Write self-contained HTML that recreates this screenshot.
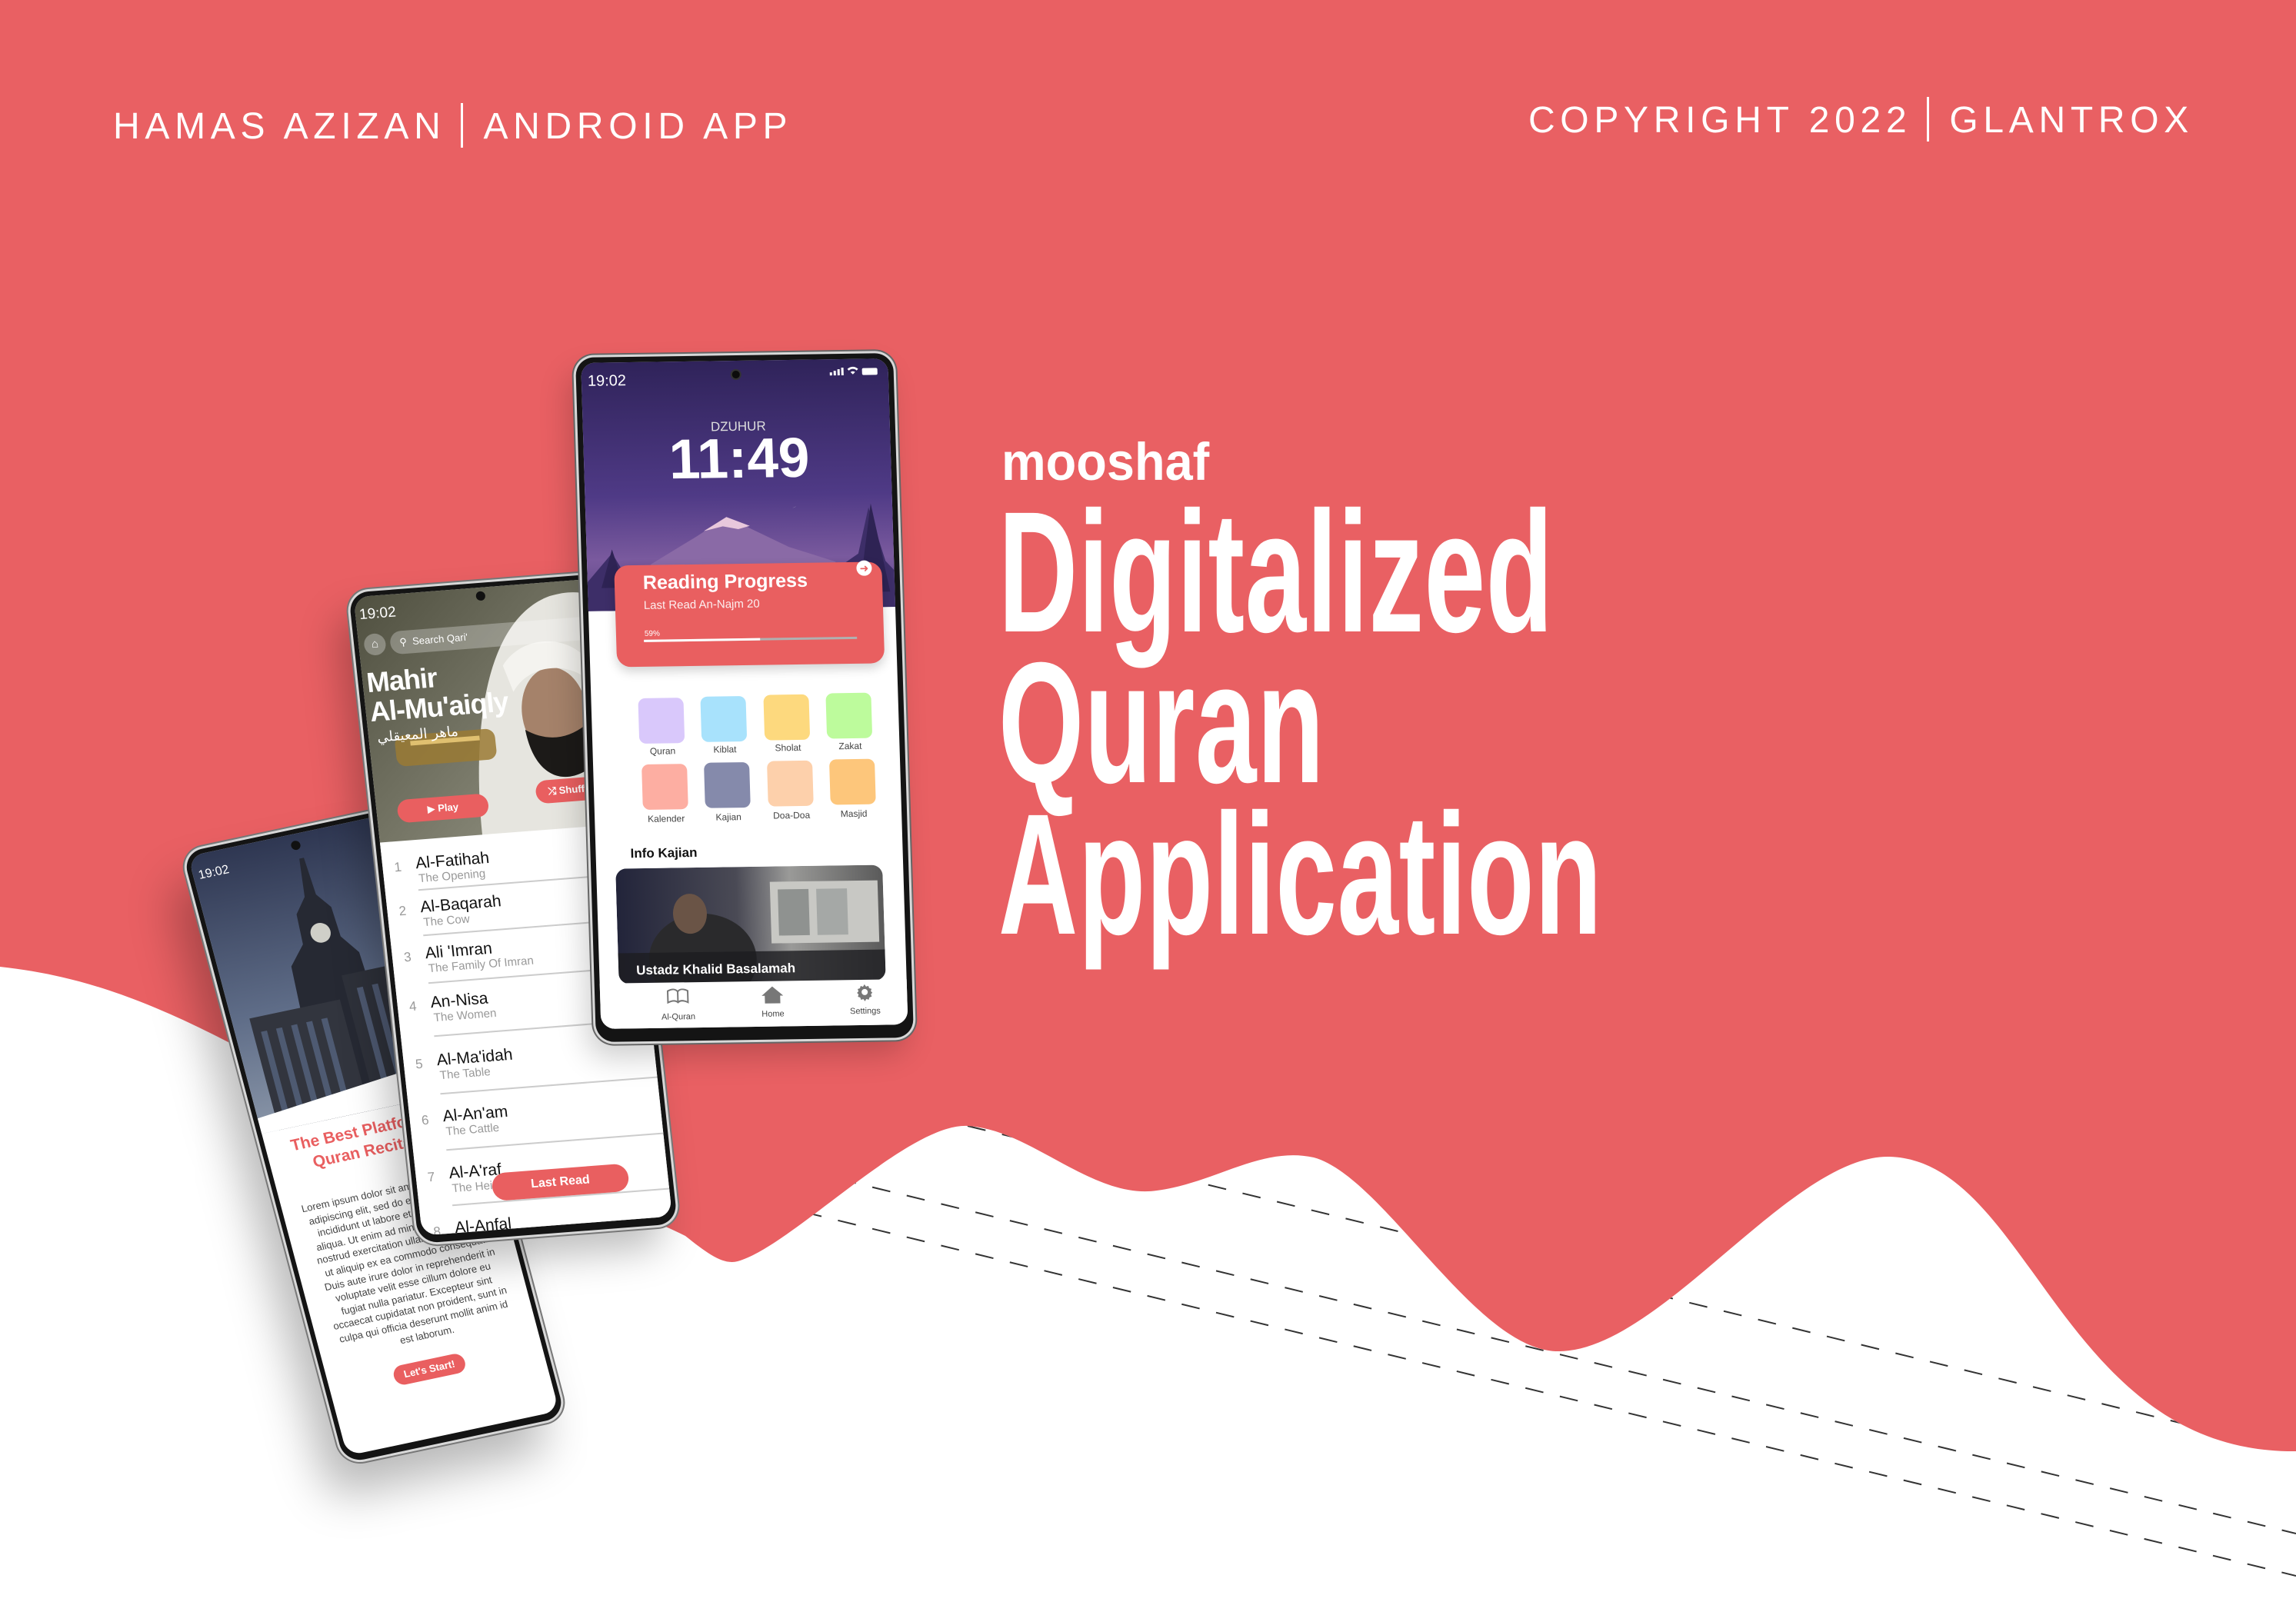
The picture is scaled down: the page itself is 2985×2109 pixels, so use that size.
<!DOCTYPE html>
<html><head><meta charset="utf-8">
<style>
*{margin:0;padding:0;box-sizing:border-box}
body{width:2985px;height:2109px;overflow:hidden;position:relative;background:#fff;font-family:"Liberation Sans","DejaVu Sans",sans-serif}
.abs{position:absolute;white-space:nowrap}
.hdr{position:absolute;color:#fff;font-size:48px;line-height:48px;letter-spacing:6.7px;white-space:nowrap}
.pipe{display:inline-block;width:3px;height:58px;background:#fff;vertical-align:-12px;margin:0 26px 0 20px}
.title{position:absolute;left:1298px;color:#fff;font-weight:bold;font-size:224px;line-height:224px;white-space:nowrap;transform:scaleX(0.638);transform-origin:0 0;letter-spacing:1px}
.phone{position:absolute;transform-origin:0 0;background:#141414;box-shadow:0 0 0 3px #d8d8d8,0 0 0 5px #777}
.screen{position:absolute;overflow:hidden;background:#fff}
.in{position:absolute;left:-7px;top:-7px;width:420px;height:900px}
.in div{white-space:nowrap}
.ic{position:absolute;width:59px;height:59px;border-radius:9px}
.lb{position:absolute;width:100px;text-align:center;font-size:12px;color:#444}
.row .n{position:absolute;font-size:17px;color:#999}
.t{position:absolute;font-size:21px;color:#111;white-space:nowrap}
.s{position:absolute;font-size:15px;color:#999;white-space:nowrap}
.ln{position:absolute;height:2px;background:#ccc}
</style></head><body>
<svg class="abs" style="left:0;top:0" width="2985" height="2109" viewBox="0 0 2985 2109">
<defs><clipPath id="wc"><path d="M0,1257 C120,1270 220,1310 380,1400 C560,1500 800,1560 891,1607 C920,1630 940,1645 959,1640 C1030,1620 1180,1460 1258,1464 C1340,1468 1420,1560 1504,1548 C1580,1538 1640,1490 1708,1505 C1800,1530 1920,1760 2028,1757 C2160,1755 2330,1500 2457,1504 C2640,1510 2680,1890 2985,1887 L2985,2109 L0,2109 Z"/></clipPath></defs>
<rect width="2985" height="2109" fill="#E96063"/>
<path d="M0,1257 C120,1270 220,1310 380,1400 C560,1500 800,1560 891,1607 C920,1630 940,1645 959,1640 C1030,1620 1180,1460 1258,1464 C1340,1468 1420,1560 1504,1548 C1580,1538 1640,1490 1708,1505 C1800,1530 1920,1760 2028,1757 C2160,1755 2330,1500 2457,1504 C2640,1510 2680,1890 2985,1887 L2985,2109 L0,2109 Z" fill="#fff"/>
<g clip-path="url(#wc)" stroke="#333" stroke-width="2" stroke-dasharray="24 22" fill="none">
<line x1="1258" y1="1464" x2="2985" y2="1887"/>
<line x1="1000" y1="1511" x2="2985" y2="1994"/>
<line x1="1000" y1="1565" x2="2985" y2="2049"/>
</g>
</svg>

<div class="hdr" style="left:147px;top:134px">HAMAS AZIZAN<span class="pipe"></span>ANDROID APP</div>
<div class="hdr" style="right:133px;top:126px">COPYRIGHT 2022<span class="pipe"></span>GLANTROX</div>

<div class="abs" style="left:1302px;top:566px;color:#fff;font-weight:bold;font-size:69px;line-height:69px;transform:scaleX(0.94);transform-origin:0 0">mooshaf</div>
<div class="title" style="top:632px">Digitalized</div>
<div class="title" style="top:828px">Quran</div>
<div class="title" style="top:1025px">Application</div>

<!-- Phone 3 (back) -->
<div class="phone" style="left:237px;top:1109px;width:293px;height:821px;border-radius:26px;transform:matrix(0.98,-0.208,0.257,0.967,0,0);box-shadow:0 0 0 3px #d8d8d8,0 0 0 5px #777,-30px 40px 60px rgba(0,0,0,.28)">
 <div class="screen" style="left:6px;top:6px;width:281px;height:806px;border-radius:20px">
  <div class="in">
   <svg class="abs" style="left:0;top:0" width="293" height="380">
    <defs><linearGradient id="sky" x1="0" y1="0" x2="0" y2="1"><stop offset="0" stop-color="#2d3550"/><stop offset="0.6" stop-color="#5f6d88"/><stop offset="1" stop-color="#8a96a8"/></linearGradient></defs>
    <rect width="293" height="380" fill="url(#sky)"/>
    <polygon points="146,40 152,40 155,90 170,110 172,150 190,175 200,380 90,380 100,175 122,150 124,110 140,90" fill="#262933"/>
    <circle cx="148" cy="140" r="13" fill="#cfcfc8"/>
    <rect x="30" y="230" width="120" height="150" fill="#32353e"/>
    <rect x="160" y="200" width="90" height="180" fill="#2e313a"/>
    <g fill="#56647f" opacity=".8"><rect x="40" y="250" width="8" height="110"/><rect x="60" y="250" width="8" height="110"/><rect x="80" y="250" width="8" height="110"/><rect x="100" y="250" width="8" height="110"/><rect x="120" y="250" width="8" height="110"/><rect x="175" y="220" width="8" height="130"/><rect x="195" y="220" width="8" height="130"/><rect x="215" y="220" width="8" height="130"/></g>
    <path d="M0,360 L293,330 L293,380 L0,380Z" fill="#fff"/>
   </svg>
   <div class="abs" style="left:14px;top:26px;color:#fff;font-size:16px">19:02</div>
   <div class="abs" style="left:140px;top:16px;width:12px;height:12px;border-radius:50%;background:#111"></div>
   <div class="abs" style="left:20px;top:390px;width:253px;text-align:center;color:#E95F60;font-weight:bold;font-size:21px;line-height:27px">The Best Platform for<br>Quran Recitation</div>
   <div class="abs" style="left:30px;top:478px;width:235px;text-align:center;color:#444;font-size:13px;line-height:17.6px;white-space:normal!important">Lorem ipsum dolor sit amet, consectetur adipiscing elit, sed do eiusmod tempor incididunt ut labore et dolore magna aliqua. Ut enim ad minim veniam, quis nostrud exercitation ullamco laboris nisi ut aliquip ex ea commodo consequat. Duis aute irure dolor in reprehenderit in voluptate velit esse cillum dolore eu fugiat nulla pariatur. Excepteur sint occaecat cupidatat non proident, sunt in culpa qui officia deserunt mollit anim id est laborum.</div>
   <div class="abs" style="left:92px;top:712px;width:94px;height:26px;border-radius:13px;background:#E95F60;color:#fff;font-size:13px;line-height:26px;text-align:center;font-weight:bold">Let's Start!</div>
  </div>
 </div>
</div>

<!-- Phone 2 (middle) -->
<div class="phone" style="left:453px;top:771px;width:337px;height:846px;border-radius:26px;transform:matrix(1,-0.077,0.1076,1,0,0);box-shadow:0 0 0 3px #d8d8d8,0 0 0 5px #777,-20px 30px 50px rgba(0,0,0,.25)">
 <div class="screen" style="left:6px;top:6px;width:325px;height:830px;border-radius:20px">
  <div class="in">
   <svg class="abs" style="left:0;top:0" width="337" height="330">
    <defs><linearGradient id="bg2" x1="0" y1="0" x2="1" y2="1"><stop offset="0" stop-color="#4e4e3e"/><stop offset="1" stop-color="#9a9a8a"/></linearGradient></defs>
    <rect width="337" height="330" fill="url(#bg2)"/>
    <path d="M140,330 C140,200 170,50 260,25 C330,10 337,60 337,60 L337,330Z" fill="#e6e5df"/>
    <ellipse cx="250" cy="175" rx="42" ry="58" fill="#a5826a"/>
    <path d="M210,195 C215,250 245,270 280,255 C292,225 292,205 288,195 C262,212 235,212 210,195Z" fill="#1c1a18"/>
    <path d="M190,110 C220,70 285,75 305,120 L300,140 C280,112 225,108 200,145Z" fill="#f4f3ef"/>
    <rect x="40" y="190" width="130" height="40" rx="12" fill="#9a7a34" opacity=".85"/>
    <rect x="60" y="198" width="90" height="6" fill="#e0c070"/>
   </svg>
   <div class="abs" style="left:12px;top:20px;color:#fff;font-size:19px">19:02</div>
   <div class="abs" style="left:165px;top:12px;width:12px;height:12px;border-radius:50%;background:#111"></div>
   <div class="abs" style="left:14px;top:56px;width:28px;height:28px;border-radius:14px;background:rgba(255,255,255,.3);color:#fff;font-size:15px;text-align:center;line-height:28px">⌂</div>
   <div class="abs" style="left:48px;top:55px;width:300px;height:30px;border-radius:15px;background:rgba(255,255,255,.28);color:#fff;font-size:13px;line-height:30px;padding-left:12px">⚲ &nbsp;Search Qari'</div>
   <div class="abs" style="left:12px;top:100px;color:#fff;font-weight:bold;font-size:36px;line-height:38px;letter-spacing:-1px">Mahir<br>Al-Mu'aiqly</div>
   <div class="abs" style="left:18px;top:180px;color:#fff;font-size:18px;font-family:'DejaVu Sans',sans-serif">ماهر المعيقلي</div>
   <div class="abs" style="left:34px;top:273px;width:118px;height:30px;border-radius:15px;background:#E95F60;color:#fff;font-size:13px;line-height:30px;text-align:center;font-weight:bold">▶ Play</div>
   <div class="abs" style="left:215px;top:262px;width:150px;height:30px;border-radius:15px;background:#E95F60;color:#fff;font-size:13px;line-height:30px;padding-left:16px;font-weight:bold">⤮ Shuffle</div>
   <div class="abs" style="left:0;top:326px;width:337px;height:520px;background:#fff"></div>
   <div class="row">
    <div class="n" style="left:22px;top:350px">1</div><div class="t" style="left:50px;top:345px">Al-Fatihah</div><div class="s" style="left:52px;top:368px">The Opening</div><div class="ln" style="left:50px;top:390px;width:300px"></div>
    <div class="n" style="left:22px;top:407px">2</div><div class="t" style="left:50px;top:402px">Al-Baqarah</div><div class="s" style="left:52px;top:425px">The Cow</div><div class="ln" style="left:50px;top:449px;width:300px"></div>
    <div class="n" style="left:22px;top:467px">3</div><div class="t" style="left:50px;top:462px">Ali 'Imran</div><div class="s" style="left:52px;top:485px">The Family Of Imran</div><div class="ln" style="left:50px;top:511px;width:300px"></div>
    <div class="n" style="left:22px;top:531px">4</div><div class="t" style="left:50px;top:526px">An-Nisa</div><div class="s" style="left:52px;top:549px">The Women</div><div class="ln" style="left:50px;top:580px;width:300px"></div>
    <div class="n" style="left:22px;top:606px">5</div><div class="t" style="left:50px;top:601px">Al-Ma'idah</div><div class="s" style="left:52px;top:624px">The Table</div><div class="ln" style="left:50px;top:655px;width:300px"></div>
    <div class="n" style="left:22px;top:679px">6</div><div class="t" style="left:50px;top:674px">Al-An'am</div><div class="s" style="left:52px;top:697px">The Cattle</div><div class="ln" style="left:50px;top:728px;width:300px"></div>
    <div class="n" style="left:22px;top:753px">7</div><div class="t" style="left:50px;top:748px">Al-A'raf</div><div class="s" style="left:52px;top:771px">The Heights</div><div class="ln" style="left:50px;top:800px;width:300px"></div>
    <div class="n" style="left:22px;top:824px">8</div><div class="t" style="left:50px;top:819px">Al-Anfal</div>
   </div>
   <div class="abs" style="left:104px;top:764px;width:177px;height:36px;border-radius:18px;background:#E95F60;color:#fff;font-size:16px;line-height:36px;text-align:center;font-weight:bold">Last Read</div>
  </div>
 </div>
</div>

<!-- Main phone -->
<div class="phone" style="left:748px;top:465px;width:413px;height:890px;border-radius:24px;transform:matrix(1,-0.0145,0.0303,1,0,0);box-shadow:0 0 0 3px #d8d8d8,0 0 0 5px #666,-10px 20px 40px rgba(0,0,0,.2)">
 <div class="screen" style="left:7px;top:7px;width:399px;height:866px;border-radius:18px">
  <div class="in">
   <svg class="abs" style="left:0;top:0" width="413" height="330">
    <defs><linearGradient id="pg" x1="0" y1="0" x2="0" y2="1"><stop offset="0" stop-color="#2e2258"/><stop offset="0.55" stop-color="#4f3a86"/><stop offset="0.8" stop-color="#7a5a9e"/><stop offset="1" stop-color="#5b4584"/></linearGradient></defs>
    <rect width="413" height="330" fill="url(#pg)"/>
    <path d="M90,270 L150,235 L190,210 L230,230 L270,250 L300,260 L330,270 L330,330 L90,330Z" fill="#8a6aa6"/>
    <path d="M160,228 L190,210 L220,222 L205,226 L185,222Z" fill="#e8c8dc"/>
    <path d="M0,300 L40,255 L60,290 L110,280 L160,300 L230,285 L300,300 L360,260 L375,200 L395,270 L413,290 L413,330 L0,330Z" fill="#3d2e68"/>
    <path d="M25,300 L40,250 L55,300Z" fill="#2e2354"/>
    <path d="M360,310 L378,195 L400,310Z" fill="#2e2354"/>
    <path d="M270,196 a7,7 0 0,0 12,-8 a6,6 0 0,1 -12,8Z" fill="#fff"/>
    <g fill="#fff"><rect x="330" y="24" width="3" height="4"/><rect x="335" y="22" width="3" height="6"/><rect x="340" y="20" width="3" height="8"/><rect x="345" y="18" width="3" height="10"/>
    <path d="M353,20 a10,10 0 0,1 14,0 l-2,2 a7,7 0 0,0 -10,0Z M357,24 a5,5 0 0,1 6,0 l-3,3Z"/>
    <rect x="372" y="19" width="20" height="9" rx="2"/></g>
   </svg>
   <div class="abs" style="left:15px;top:20px;color:#fff;font-size:20px">19:02</div>
   <div class="abs" style="left:201px;top:18px;width:14px;height:14px;border-radius:50%;background:#0c0c0c;border:2px solid #333"></div>
   <div class="abs" style="left:109px;top:83px;width:200px;text-align:center;color:#ddd;font-size:17px">DZUHUR</div>
   <div class="abs" style="left:109px;top:98px;width:200px;text-align:center;color:#fff;font-size:73px;line-height:73px;font-weight:bold">11:49</div>
   <div class="abs" style="left:42px;top:271px;width:348px;height:132px;border-radius:18px;background:#E95F60;box-shadow:0 6px 14px rgba(0,0,0,.18)"></div>
   <div class="abs" style="left:79px;top:282px;color:#fff;font-size:25px;line-height:25px;font-weight:bold">Reading Progress</div>
   <div class="abs" style="left:79px;top:315px;color:#fff;font-size:15px;opacity:.9">Last Read An-Najm 20</div>
   <div class="abs" style="left:79px;top:355px;color:#fff;font-size:10px">59%</div>
   <div class="abs" style="left:78px;top:368px;width:277px;height:3px;background:#b0b0b0"></div>
   <div class="abs" style="left:78px;top:368px;width:151px;height:3px;background:#fff"></div>
   <div class="abs" style="left:357px;top:269px;width:20px;height:20px;border-radius:50%;background:#fff;color:#E95F60;font-size:14px;line-height:20px;text-align:center;font-weight:bold">➜</div>
   <div class="ic" style="left:68px;top:444px;background:#D9C8FB"></div>
   <div class="ic" style="left:149px;top:443px;background:#A8E2FC"></div>
   <div class="ic" style="left:231px;top:442px;background:#FDD97E"></div>
   <div class="ic" style="left:312px;top:441px;background:#BDFB9C"></div>
   <div class="lb" style="left:48px;top:506px">Quran</div>
   <div class="lb" style="left:129px;top:505px">Kiblat</div>
   <div class="lb" style="left:211px;top:504px">Sholat</div>
   <div class="lb" style="left:292px;top:503px">Zakat</div>
   <div class="ic" style="left:70px;top:530px;background:#FDAEA2"></div>
   <div class="ic" style="left:151px;top:529px;background:#858AAB"></div>
   <div class="ic" style="left:233px;top:528px;background:#FDD0AB"></div>
   <div class="ic" style="left:314px;top:527px;background:#FDC67B"></div>
   <div class="lb" style="left:50px;top:594px">Kalender</div>
   <div class="lb" style="left:131px;top:593px">Kajian</div>
   <div class="lb" style="left:213px;top:592px">Doa-Doa</div>
   <div class="lb" style="left:294px;top:591px">Masjid</div>
   <div class="abs" style="left:52px;top:636px;color:#111;font-size:17px;font-weight:bold">Info Kajian</div>
   <svg class="abs" style="left:32px;top:665px" width="400" height="150">
    <defs><linearGradient id="kg" x1="0" y1="0" x2="1" y2="0"><stop offset="0" stop-color="#22243a"/><stop offset="0.45" stop-color="#4a4a55"/><stop offset="0.65" stop-color="#9a9a98"/><stop offset="1" stop-color="#5a5a5a"/></linearGradient><clipPath id="kc"><rect width="347" height="150" rx="14"/></clipPath></defs>
    <g clip-path="url(#kc)"><rect width="347" height="150" fill="url(#kg)"/>
    <rect x="200" y="20" width="140" height="80" fill="#c8c8c4"/>
    <rect x="210" y="30" width="40" height="60" fill="#8f9290"/><rect x="260" y="30" width="40" height="60" fill="#a5a8a6"/>
    <ellipse cx="110" cy="120" rx="70" ry="60" fill="#2a2a2c"/>
    <ellipse cx="95" cy="60" rx="22" ry="26" fill="#6a5446"/>
    <rect x="0" y="110" width="347" height="40" fill="#1d1d20" opacity=".8"/></g>
    <rect x="378" y="0" width="40" height="150" rx="14" fill="#2a2c44"/>
    <rect x="388" y="30" width="20" height="50" fill="#c8a440"/>
   </svg>
   <div class="abs" style="left:55px;top:788px;color:#fff;font-size:17px;font-weight:bold">Ustadz Khalid Basalamah</div>
   <div class="abs" style="left:412px;top:788px;color:#fff;font-size:17px;font-weight:bold">Ust</div>
   <div class="abs" style="left:0;top:814px;width:413px;height:70px;background:#fff"></div>
   <svg class="abs" style="left:93px;top:822px" width="30" height="22"><path d="M2,3 L2,18 C8,15 12,15 15,18 C18,15 22,15 28,18 L28,3 C22,0 18,0 15,4 C12,0 8,0 2,3Z M15,4 L15,18" fill="none" stroke="#777" stroke-width="2"/></svg>
   <svg class="abs" style="left:216px;top:820px" width="30" height="24"><path d="M15,1 L29,13 L25,13 L25,23 L5,23 L5,13 L1,13Z" fill="#777"/></svg>
   <svg class="abs" style="left:339px;top:818px" width="24" height="24" viewBox="0 0 24 24"><path d="M12,2 l2,3 3,-1 1,3 3,1 -1,3 2,2 -2,2 1,3 -3,1 -1,3 -3,-1 -2,3 -2,-3 -3,1 -1,-3 -3,-1 1,-3 -2,-2 2,-2 -1,-3 3,-1 1,-3 3,1Z" fill="#777"/><circle cx="12" cy="12" r="4" fill="#fff"/></svg>
   <div class="lb" style="left:58px;top:853px;font-size:11px">Al-Quran</div>
   <div class="lb" style="left:181px;top:851px;font-size:11px">Home</div>
   <div class="lb" style="left:301px;top:849px;font-size:11px">Settings</div>
  </div>
 </div>
</div>
</body></html>
